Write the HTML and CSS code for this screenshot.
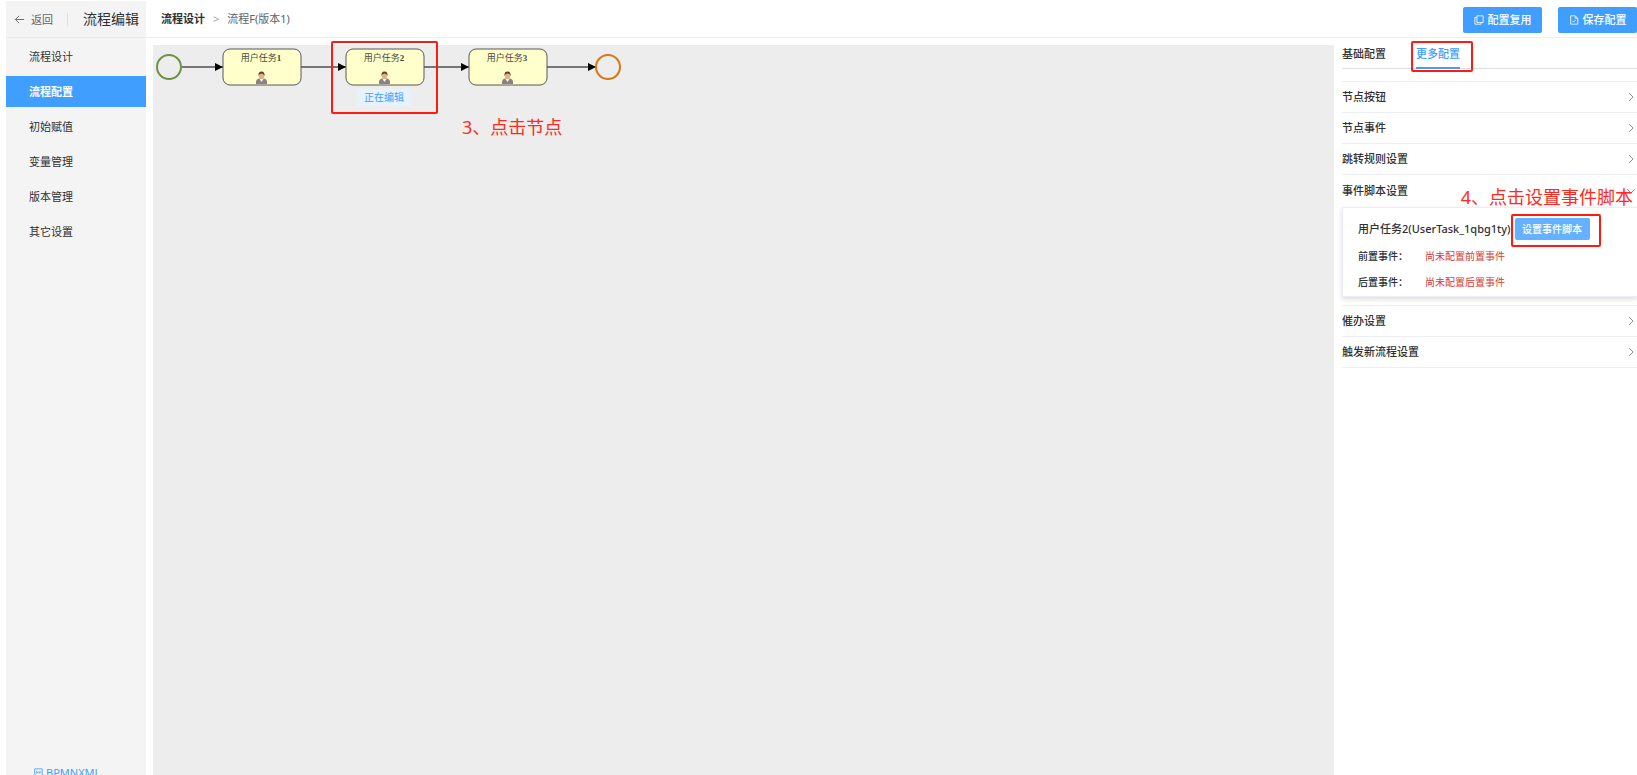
FILE: index.html
```html
<!DOCTYPE html>
<html lang="zh-CN">
<head>
    <meta charset="UTF-8">
    <meta name="viewport" content="width=device-width, initial-scale=1.0">
    <title>流程编辑</title>
    <link rel="stylesheet" href="styles.css">
</head>
<body>
    <div class="app">
        <aside class="sidebar">
            <div class="sidebar-header">
                <a class="back" href="#">
                    <svg class="back-icon" viewBox="0 0 12 12"><path d="M11 6H1.5M5.5 2L1.5 6l4 4" /></svg>
                    返回
                </a>
                <h1 class="sidebar-title">流程编辑</h1>
            </div>
            <nav class="menu">
                <a href="#design">流程设计</a>
                <a href="#config" class="active">流程配置</a>
                <a href="#init">初始赋值</a>
                <a href="#vars">变量管理</a>
                <a href="#versions">版本管理</a>
                <a href="#other">其它设置</a>
            </nav>
            <a class="xml-link" href="#xml">
                <svg class="icon" viewBox="0 0 12 12"><path d="M2 1h9v10H2zM4.500 3.500v3l2-2 2 2v-3M1 9h10" /></svg>
                BPMNXML
            </a>
        </aside>

        <div class="main">
            <header class="topbar">
                <div class="breadcrumb">
                    <a href="#design">流程设计</a>
                    <span class="separator">&gt;</span>
                    <span>流程F(版本1)</span>
                </div>
                <div class="actions">
                    <button type="button" class="btn">
                        <svg class="icon" viewBox="0 0 12 12"><path d="M3.500 1h7.500v8H3.500zM3.500 3H1v8h7.500V9" /></svg>
                        配置复用
                    </button>
                    <button type="button" class="btn">
                        <svg class="icon" viewBox="0 0 12 12"><path d="M2 1h5.500L10.500 4v7H2zM7.500 1v3h3M4 7l1.500 1.500L8 6" /></svg>
                        保存配置
                    </button>
                </div>
            </header>

            <div class="workspace">
                <div class="canvas">
                    <svg class="diagram" width="480" height="60">
                        <defs>
                            <marker id="arrow" viewBox="0 0 8 8" refX="8" refY="4" markerWidth="8" markerHeight="8" markerUnits="userSpaceOnUse">
                                <path d="M0 0l8 4-8 4z" />
                            </marker>
                            <g id="user">
                                <path d="M0 13v-2q0-3 3-3.500h5q3 .5 3 3.500v2z" fill="#8d8083" />
                                <path d="M3.500 8l2 3 2-3z" fill="#fff" />
                                <ellipse cx="5.500" cy="4.500" rx="2.600" ry="3.500" fill="#e2b184" />
                                <path d="M2.500 5Q2 .5 5.500 .5T8.500 5Q8 2.500 5.500 2.500T2.500 5z" fill="#60402c" />
                            </g>
                        </defs>
                        <g class="flows">
                            <path d="M29 22h41" />
                            <path d="M148 22h45" />
                            <path d="M271 22h45" />
                            <path d="M394 22h49" />
                        </g>
                        <circle class="start" cx="16" cy="22" r="12" />
                        <circle class="end" cx="455" cy="22" r="12" />
                        <g class="tasks">
                            <rect x="70" y="4" width="78" height="36" rx="7" />
                            <rect x="193" y="4" width="78" height="36" rx="7" />
                            <rect x="316" y="4" width="78" height="36" rx="7" />
                        </g>
                        <g class="labels">
                            <text x="108" y="16">用户任务<tspan>1</tspan></text>
                            <text x="231" y="16">用户任务<tspan>2</tspan></text>
                            <text x="354" y="16">用户任务<tspan>3</tspan></text>
                        </g>
                        <use href="#user" x="103" y="26" />
                        <use href="#user" x="226" y="26" />
                        <use href="#user" x="349" y="26" />
                    </svg>
                    <span class="editing-tag">正在编辑</span>
                    <div class="mark mark-node"></div>
                    <div class="note note-node">3、点击节点</div>
                </div>

                <section class="panel">
                    <div class="tabs" role="tablist">
                        <button type="button" role="tab" class="tab">基础配置</button>
                        <button type="button" role="tab" class="tab active" aria-selected="true">更多配置<span class="mark mark-tab"></span></button>
                    </div>
                    <div class="accordion">
                        <button type="button" class="row">节点按钮<svg class="chevron" viewBox="0 0 10 10"><path d="M3 1l4 4-4 4" /></svg></button>
                        <button type="button" class="row">节点事件<svg class="chevron" viewBox="0 0 10 10"><path d="M3 1l4 4-4 4" /></svg></button>
                        <button type="button" class="row">跳转规则设置<svg class="chevron" viewBox="0 0 10 10"><path d="M3 1l4 4-4 4" /></svg></button>
                        <button type="button" class="row open" aria-expanded="true">事件脚本设置<svg class="chevron" viewBox="0 0 10 10"><path d="M1 3l4 4 4-4" /></svg></button>
                        <div class="row-body">
                            <div class="card">
                                <div class="card-title">
                                    用户任务2(UserTask_1qbg1ty)
                                    <button type="button" class="btn-small">设置事件脚本<span class="mark mark-script"></span></button>
                                    <div class="note note-script">4、点击设置事件脚本</div>
                                </div>
                                <dl class="events">
                                    <dt>前置事件：</dt>
                                    <dd>尚未配置前置事件</dd>
                                    <dt>后置事件：</dt>
                                    <dd>尚未配置后置事件</dd>
                                </dl>
                            </div>
                        </div>
                        <button type="button" class="row">催办设置<svg class="chevron" viewBox="0 0 10 10"><path d="M3 1l4 4-4 4" /></svg></button>
                        <button type="button" class="row">触发新流程设置<svg class="chevron" viewBox="0 0 10 10"><path d="M3 1l4 4-4 4" /></svg></button>
                    </div>
                </section>
            </div>
        </div>
    </div>
</body>
</html>
```
FILE: styles.css
```css
* {
    box-sizing: border-box;
}

body {
    margin: 0;
    font-family: "Noto Sans", "Noto Sans CJK SC", sans-serif;
    font-size: 11px;
    line-height: 16px;
    color: #303133;
    background-color: #ffffff;
    overflow: hidden;
}

a {
    color: inherit;
    text-decoration: none;
}

button {
    font: inherit;
    color: inherit;
    border: none;
    background: none;
    padding: 0;
    cursor: pointer;
}

.app {
    display: flex;
    height: 100vh;
    padding: 1px 0 0 6px;
}

/* left menu */
.sidebar {
    display: flex;
    flex-direction: column;
    flex: none;
    width: 140px;
    background-color: #f4f4f4;
}

.sidebar-header {
    display: flex;
    align-items: center;
    flex: none;
    height: 37px;
    padding-left: 8px;
    border-bottom: 1px solid #ebebeb;
}

.back {
    display: flex;
    align-items: center;
    gap: 6px;
    padding-right: 14px;
    border-right: 1px solid #dcdfe6;
    line-height: 13px;
    color: #606266;
}

.back-icon {
    width: 11px;
    height: 11px;
    fill: none;
    stroke: #606266;
}

.sidebar-title {
    margin: 0 0 0 15px;
    font-size: 14px;
    font-weight: 400;
    white-space: nowrap;
}

.menu {
    display: flex;
    flex-direction: column;
    gap: 4px;
    padding-top: 3px;
}

.menu a {
    height: 31px;
    padding-left: 23px;
    line-height: 31px;
}

.menu a.active {
    background-color: #409eff;
    color: #ffffff;
    font-weight: 700;
}

.icon {
    width: 10px;
    height: 10px;
    fill: none;
    stroke: currentColor;
}

.xml-link {
    display: flex;
    align-items: center;
    gap: 3px;
    height: 16px;
    margin: auto 0 -6px 27px;
    color: #409eff;
}

/* header */
.main {
    display: flex;
    flex-direction: column;
    flex: 1;
    min-width: 0;
}

.topbar {
    display: flex;
    align-items: center;
    justify-content: space-between;
    flex: none;
    height: 37px;
    padding-left: 15px;
    border-bottom: 1px solid #ebeef5;
}

.breadcrumb {
    display: flex;
    gap: 8px;
    color: #606266;
}

.breadcrumb a {
    color: #303133;
    font-weight: 700;
}

.separator {
    color: #a0a4ad;
}

.actions {
    display: flex;
    gap: 16px;
    padding-top: 2px;
}

.btn {
    display: flex;
    align-items: center;
    justify-content: center;
    gap: 4px;
    width: 79px;
    height: 26px;
    border-radius: 2px;
    background-color: #409eff;
    color: #ffffff;
    font-weight: 500;
}

.workspace {
    display: flex;
    flex: 1;
    gap: 8px;
    padding: 7px 0 0 7px;
    min-height: 0;
}

/* bpmn canvas */
.canvas {
    position: relative;
    flex: 1;
    background-color: #ededed;
}

.diagram {
    display: block;
}

.flows path {
    stroke: #000000;
    marker-end: url(#arrow);
}

.start,
.end {
    fill: none;
    stroke: #6b9442;
    stroke-width: 2;
}

.end {
    stroke: #d9780f;
}

.tasks rect {
    fill: #ffffcc;
    stroke: #585858;
}

.labels text {
    font-family: "Liberation Serif", "Noto Sans CJK SC", serif;
    font-size: 9px;
    text-anchor: middle;
    fill: #4a4a3c;
}

.labels tspan {
    font-weight: 700;
}

.editing-tag {
    position: absolute;
    top: 44px;
    left: 204px;
    width: 54px;
    height: 17px;
    border-radius: 2px;
    background-color: #e6f2ff;
    color: #409eff;
    font-size: 10px;
    line-height: 17px;
    text-align: center;
}

/* red guide marks */
.mark {
    position: absolute;
    border: 2px solid #ff1a12;
    border-radius: 2px;
}

.mark-node {
    top: -4px;
    left: 178px;
    width: 107px;
    height: 73px;
}

.mark-tab {
    top: -4px;
    left: -5px;
    width: 62px;
    height: 31px;
}

.mark-script {
    top: -4px;
    left: -4px;
    width: 90px;
    height: 33px;
}

.note {
    position: absolute;
    color: #ff2a1c;
    font-size: 18px;
    font-weight: 400;
    line-height: 24px;
    white-space: nowrap;
}

.note-node {
    top: 70px;
    left: 309px;
}

.note-script {
    right: 4px;
    bottom: 31px;
}

/* settings panel */
.panel {
    flex: none;
    width: 295px;
}

.tabs {
    display: flex;
    gap: 30px;
    height: 24px;
    border-bottom: 1px solid #dcdfe6;
}

.tab {
    position: relative;
    height: 24px;
    padding-bottom: 7px;
    font-weight: 500;
}

.tab.active {
    border-bottom: 2px solid #409eff;
    padding-bottom: 5px;
    color: #409eff;
}

.accordion {
    margin-top: 12px;
    border-top: 1px solid #ebeef5;
}

.row {
    display: flex;
    align-items: center;
    justify-content: space-between;
    width: 100%;
    height: 31px;
    padding-right: 1px;
    border-bottom: 1px solid #ebeef5;
    font-weight: 500;
}

.row.open {
    height: 32px;
    border-bottom: none;
}

.chevron {
    width: 10px;
    height: 10px;
    fill: none;
    stroke: #909399;
}

.row-body {
    padding-bottom: 8px;
    border-bottom: 1px solid #ebeef5;
}

.card {
    height: 90px;
    padding: 10px 0 0 15px;
    border: 1px solid #ebeef5;
    border-right: none;
    box-shadow: 0 2px 5px rgba(0, 0, 0, 0.14);
    font-size: 10px;
}

.card-title {
    position: relative;
    display: flex;
    align-items: center;
    gap: 4px;
    font-size: 11px;
    font-weight: 500;
    white-space: nowrap;
}

.btn-small {
    position: relative;
    width: 75px;
    height: 22px;
    border-radius: 2px;
    background-color: #66b1ff;
    color: #ffffff;
    font-size: 10px;
}

.events {
    display: grid;
    grid-template-columns: 67px 1fr;
    row-gap: 10px;
    margin: 8px 0 0;
}

.events dt {
    font-weight: 500;
}

.events dd {
    margin: 0;
    color: #d93a3a;
}
```
